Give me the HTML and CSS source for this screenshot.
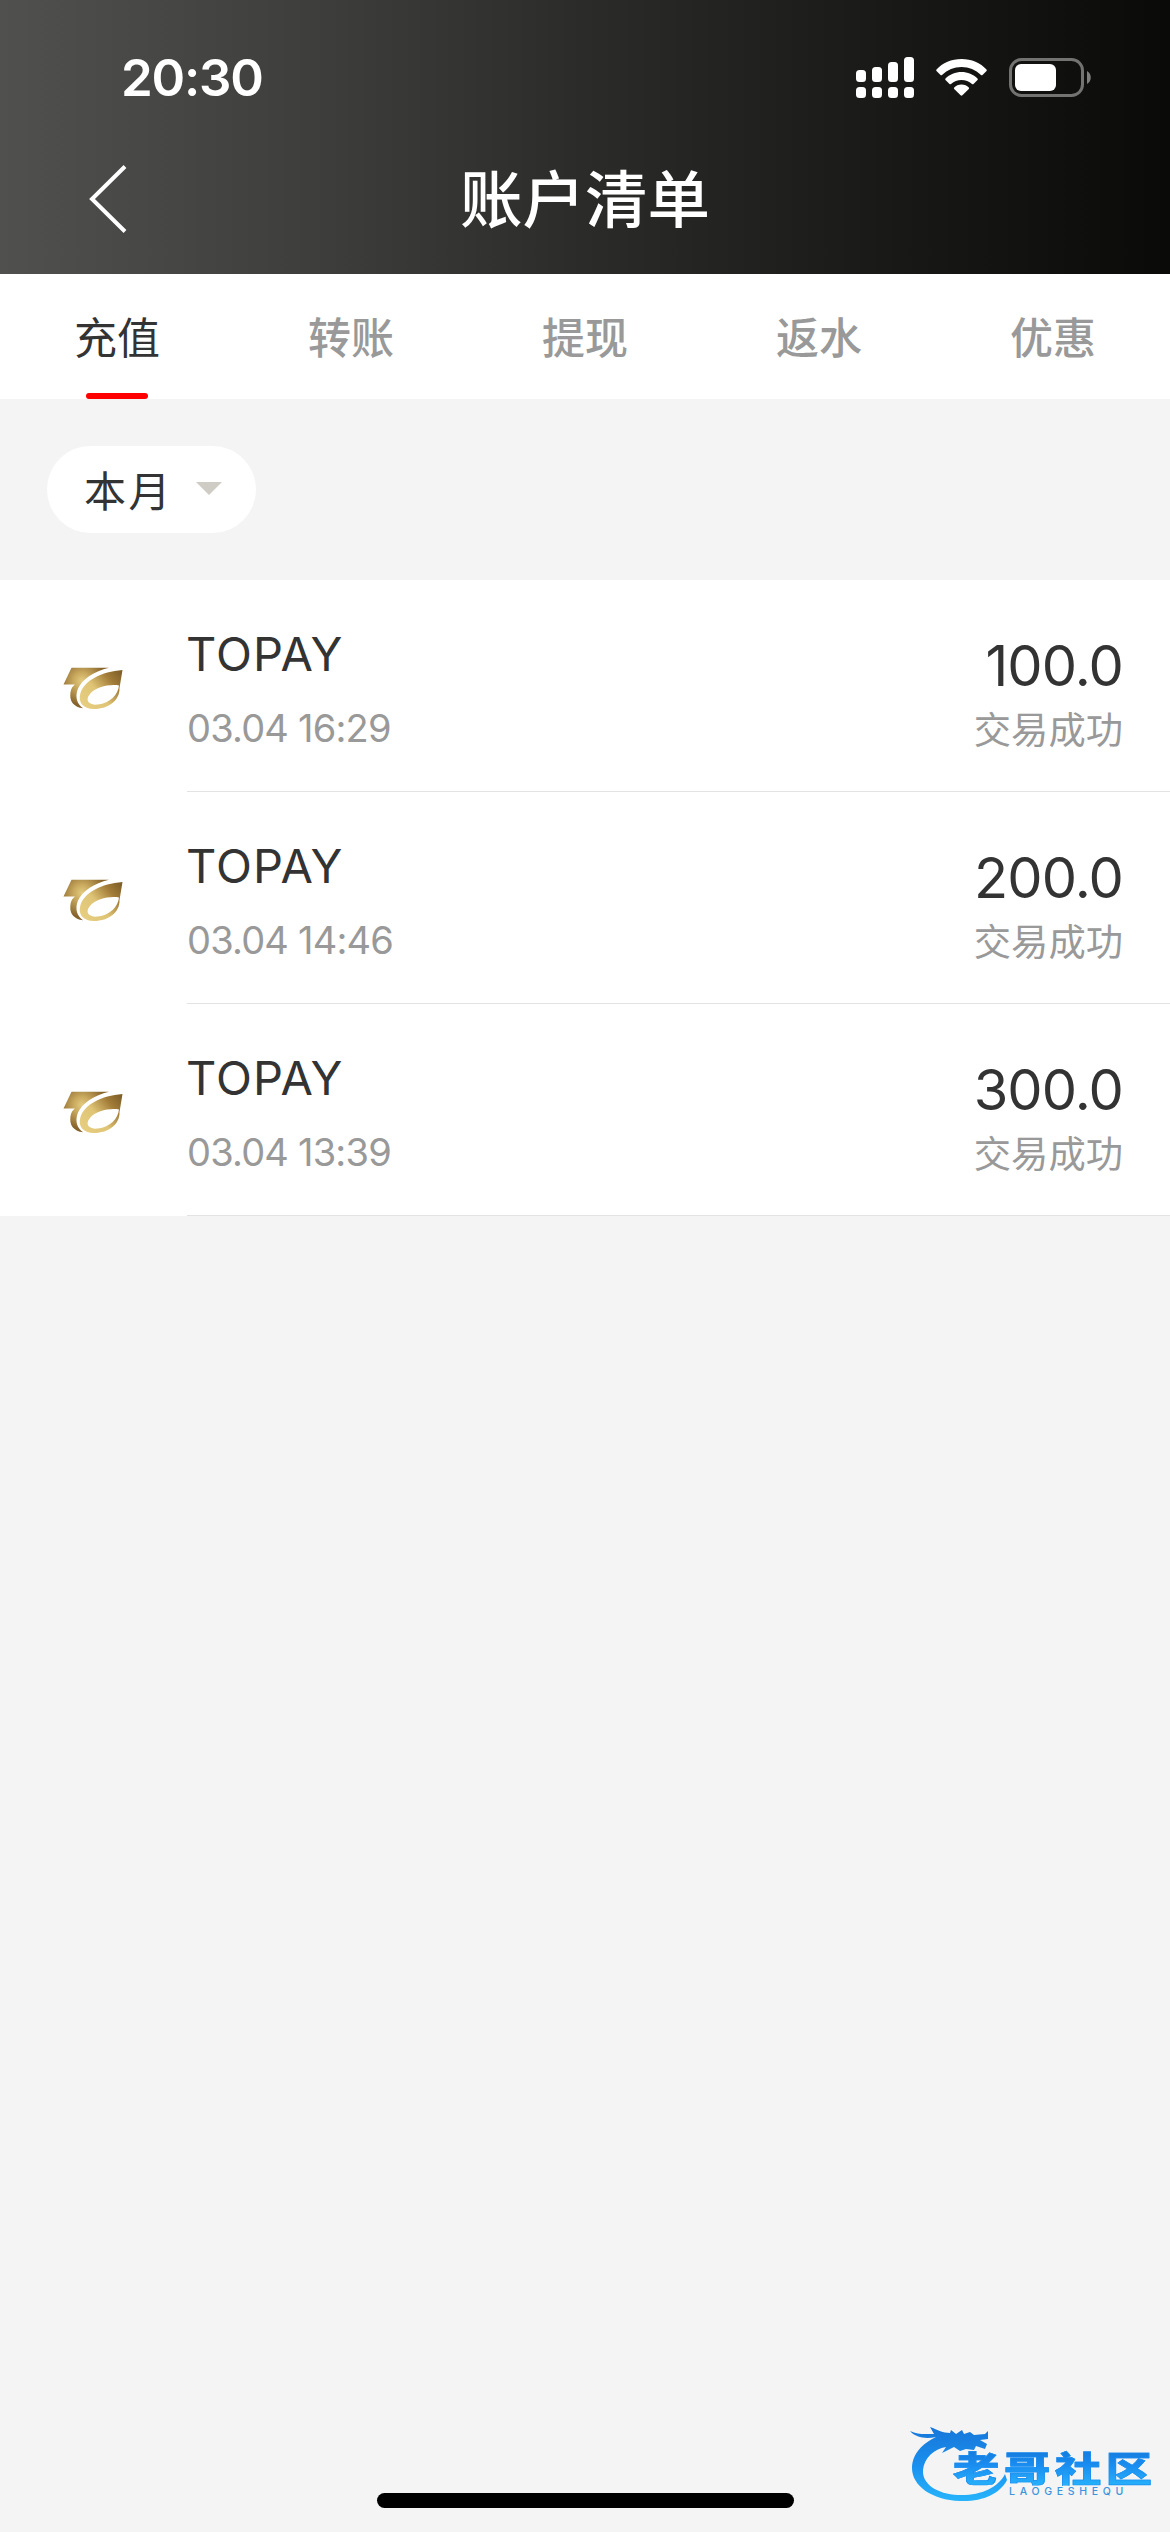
FILE: index.html
```html
<!DOCTYPE html>
<html lang="zh-CN">
<head>
<meta charset="utf-8">
<title>账户清单</title>
<link rel="stylesheet" href="styles.css">
</head>
<body>
<svg class="defs" width="0" height="0" aria-hidden="true">
  <defs>
    <radialGradient id="goldTop" gradientUnits="userSpaceOnUse" cx="19" cy="14" r="24">
      <stop offset="0" stop-color="#e3cb80"/><stop offset=".35" stop-color="#c9aa5e"/><stop offset="1" stop-color="#86622b"/>
    </radialGradient>
    <linearGradient id="goldRing" gradientUnits="userSpaceOnUse" x1="20" y1="38" x2="58" y2="6">
      <stop offset="0" stop-color="#e6cd80"/><stop offset=".4" stop-color="#dfc475"/><stop offset=".75" stop-color="#a27c38"/><stop offset="1" stop-color="#80602a"/>
    </linearGradient>
    <symbol id="topay" viewBox="0 0 60 43">
      <path fill="url(#goldTop)" d="M8.500 .7H46C31 4.500 19 12 14.800 22C11.800 30 14 37 20 41.300C11 40 7 35 7.300 28C7.500 22 9.500 19.500 12 17.500H.5Z"/>
      <path fill="url(#goldRing)" fill-rule="evenodd" d="M59.500 3L56.500 21C57 33 46 42 31 42C20 42 14.500 35 17.500 26C22 13 38 5 59.500 3ZM56 18.500C46 17 33 20 27 27C21 34 27 38.500 35 37.500C47 36 55 28 56 18.500Z"/>
    </symbol>
  </defs>
</svg>

<header class="header">
  <div class="status-bar">
    <span class="clock">20:30</span>
    <svg class="status-icons" width="236" height="44" viewBox="0 0 236 44">
      <g fill="#fff">
        <rect x="0" y="14" width="10" height="12" rx="3.500"/><rect x="16" y="11" width="10" height="15" rx="3.500"/>
        <rect x="32" y="6" width="10" height="20" rx="3.500"/><rect x="48" y="1" width="10" height="25" rx="3.500"/>
        <rect x="0" y="31" width="10" height="11" rx="3.500"/><rect x="16" y="31" width="10" height="11" rx="3.500"/>
        <rect x="32" y="31" width="10" height="11" rx="3.500"/><rect x="48" y="31" width="10" height="11" rx="3.500"/>
        <path d="M105.500 3C115.500 3 124.500 7 130.500 13.500Q131.200 14.200 130.500 15L126.500 19Q125.700 19.600 125 19C119.500 13.800 113 11 105.500 11S91.500 13.800 86 19Q85.300 19.600 84.500 19L80.500 15Q79.800 14.200 80.500 13.500C86.500 7 95.500 3 105.500 3Z"/>
        <path d="M105.500 16C111.500 16 117.500 18.500 121.500 22.500Q122.200 23.200 121.500 24L117.500 28Q116.800 28.600 116 28C113 25.300 109.500 24 105.500 24S98 25.300 95 28Q94.200 28.600 93.500 28L89.500 24Q88.800 23.200 89.500 22.500C93.500 18.500 99.500 16 105.500 16Z"/>
        <path d="M105.500 28.500C108.500 28.500 111 29.500 112.800 31.500Q113.400 32.200 112.800 33L106.400 39.300Q105.500 40 104.600 39.300L98.200 33Q97.600 32.200 98.200 31.500C100 29.500 102.500 28.500 105.500 28.500Z"/>
        <rect x="159" y="8" width="41" height="27" rx="6"/>
      </g>
      <rect x="154.500" y="3.500" width="72" height="36" rx="11" fill="none" stroke="#737372" stroke-width="3"/>
      <path d="M231 15C236 17.500 236 25.500 231 28Z" fill="#7f7f7e"/>
    </svg>
  </div>
  <div class="nav">
    <svg class="back" width="38" height="68" viewBox="0 0 38 68"><path d="M36 1.500L3 34L36 66.500" fill="none" stroke="#fff" stroke-width="4"/></svg>
    <h1 class="title">账户清单</h1>
  </div>
</header>

<nav class="tabs">
  <a class="tab tab-active">充值</a>
  <a class="tab">转账</a>
  <a class="tab">提现</a>
  <a class="tab">返水</a>
  <a class="tab">优惠</a>
</nav>

<div class="filter">
  <button class="month">本月<svg width="26" height="13" viewBox="0 0 26 13"><path d="M0 0H26L13 13Z" fill="#cfccc5"/></svg></button>
</div>

<main class="list">
  <div class="row">
    <svg class="logo" width="60" height="43"><use href="#topay"/></svg>
    <div class="body">
      <div class="info"><div class="name">TOPAY</div><div class="date">03.04 16:29</div></div>
      <div class="result"><div class="amount">100.0</div><div class="state">交易成功</div></div>
    </div>
  </div>
  <div class="row">
    <svg class="logo" width="60" height="43"><use href="#topay"/></svg>
    <div class="body">
      <div class="info"><div class="name">TOPAY</div><div class="date">03.04 14:46</div></div>
      <div class="result"><div class="amount">200.0</div><div class="state">交易成功</div></div>
    </div>
  </div>
  <div class="row">
    <svg class="logo" width="60" height="43"><use href="#topay"/></svg>
    <div class="body">
      <div class="info"><div class="name">TOPAY</div><div class="date">03.04 13:39</div></div>
      <div class="result"><div class="amount">300.0</div><div class="state">交易成功</div></div>
    </div>
  </div>
</main>

<div class="home-bar"></div>

<div class="watermark">
  <svg class="dragon" width="110" height="86" viewBox="0 0 110 86">
    <defs><linearGradient id="sea" x1="0" y1="0" x2="0" y2="1"><stop offset="0" stop-color="#1676d8"/><stop offset=".5" stop-color="#1a8fee"/><stop offset="1" stop-color="#27b4fb"/></linearGradient></defs>
    <path fill="url(#sea)" d="M0 9C8 13 15 12 24 12L20 5C28 8 33 11 40 11L41 8L46 12L52 8L54 12L60 10L64 13L75 12L78 9V17L70 18L77 22L75 27L66 24L64 28L56 27L50 29L44 25L32 31L36 25C24 27 14 36 13 48C12 62 27 72 48 73C70 74 88 66 95 52L97 58C90 72 72 80 50 79C22 78 2 64 2 46C2 32 13 21 26 15C16 17 6 16 0 9Z"/>
  </svg>
  <div class="brand"><div class="brand-cn">老哥社区</div><div class="brand-en">LAOGESHEQU</div></div>
</div>
</body>
</html>
```
FILE: styles.css
```css
* { box-sizing: border-box; }
body {
  margin: 0;
  width: 1170px;
  height: 2532px;
  position: relative;
  overflow: hidden;
  background: #f4f4f4;
  color: #333;
  font-family: Inter, "Noto Sans CJK SC", sans-serif;
}
.defs { position: absolute; }

.header { height: 274px; background: linear-gradient(90deg, #50504e 0%, #3d3d3b 28%, #2b2b29 50%, #181817 77%, #0a0a09 100%); color: #fff; }
.status-bar { height: 126px; padding: 56px 78px 0 121px; display: flex; justify-content: space-between; align-items: flex-start; }
.clock { font-size: 51px; line-height: 44px; font-weight: 600; letter-spacing: -1.200px; }
.nav { height: 148px; display: grid; grid-template-columns: 1fr auto 1fr; align-items: center; }
.back { margin: -2px 0 0 89px; }
.title { margin: -8px 0 0; font: 500 62.500px/90px "Noto Sans CJK SC", sans-serif; }

.tabs { height: 125px; display: grid; grid-template-columns: repeat(5, 1fr); background: #fff; }
.tab { display: flex; flex-direction: column; align-items: center; justify-content: space-between; padding-top: 33px; font-size: 43px; line-height: 62px; font-weight: 500; color: #999; }
.tab-active { font-weight: 400; color: #333; }
.tab-active::after { content: ""; width: 62px; height: 6px; border-radius: 3px; background: #f00; }

.filter { height: 181px; padding: 47px; }
.month { display: flex; align-items: center; gap: 23px; width: 209px; height: 87px; padding: 0 0 2px 37px; border: 0; border-radius: 44px; background: #fff; color: #333; font: 400 42px/60px "Noto Sans CJK SC", sans-serif; letter-spacing: 2.500px; }

.list { background: #fff; }
.row { height: 212px; display: flex; }
.logo { flex: none; margin: 87px 64px 0 63px; }
.body { flex: 1; display: flex; justify-content: space-between; padding-right: 47px; border-bottom: 1px solid #e3e3e3; }
.info { padding-top: 50px; }
.name { margin-left: -1px; font-size: 47px; line-height: 48px; letter-spacing: 1px; }
.date { margin-top: 28px; font-size: 38px; line-height: 44px; letter-spacing: -.8px; color: #999; }
.result { padding-top: 60px; text-align: right; }
.amount { font-size: 56px; line-height: 52px; letter-spacing: -.9px; }
.state { margin-top: 12px; font-size: 37.300px; line-height: 54px; color: #999; }

.home-bar { position: absolute; left: 377px; bottom: 24px; width: 417px; height: 15px; border-radius: 8px; background: #000; }

.watermark { position: absolute; left: 910px; top: 2422px; }
.dragon { display: block; }
.brand { position: absolute; left: 43px; top: 27px; width: 210px; }
.brand-cn { width: 160px; transform: scaleX(1.32); transform-origin: 0 50%; font: 900 35px/36px "Noto Sans CJK SC", sans-serif; letter-spacing: 3.600px; white-space: nowrap; color: transparent; -webkit-text-stroke: .6px #1a8df0; background: linear-gradient(#1479db, #1a8df0 45%, #27b0fa); background-clip: text; -webkit-background-clip: text; }
.brand-en { margin-left: 56px; font: 500 10.500px/13px Inter, sans-serif; letter-spacing: 4.700px; color: #3a93dc; }
```
